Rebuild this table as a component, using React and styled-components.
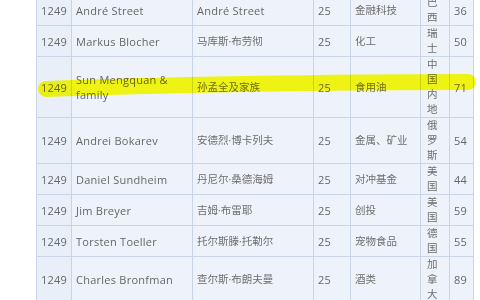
import React from "react";
import styled, { createGlobalStyle } from "styled-components";

const Global = createGlobalStyle`
  html, body { margin: 0; padding: 0; background: #fff; overflow: hidden; }
  body { width: 480px; height: 300px; }
`;

const Page = styled.div`
  position: relative;
  margin-top: -6px;
  padding-left: 36px;
`;

const Table = styled.table`
  border-collapse: collapse;
  table-layout: fixed;
  width: 437px;
  font-family: "Open Sans", "Noto Sans CJK SC", sans-serif;
  font-size: 11px;
  color: #666;
`;

const Col = styled.col`
  width: ${(p) => p.$w}px;
`;

const Row = styled.tr``;

const Cell = styled.td`
  border: 1px solid #c9d5e6;
  background: ${(p) => (p.$first ? "#e9eff9" : "#eef3fb")};
  padding: 0 ${(p) => p.$pad ?? 4}px;
  line-height: 15px;
  vertical-align: middle;
  font-size: ${(p) => (p.$cjk ? "10.5px" : "11px")};
  letter-spacing: ${(p) => (p.$cjk ? "0" : "0.25px")};
  color: ${(p) => (p.$cjk ? "#6e6e6e" : "#666")};
  word-break: ${(p) => (p.$wrap ? "break-all" : "normal")};
`;

const Highlight = styled.svg`
  position: absolute;
  left: 0;
  top: 0;
  width: 480px;
  height: 320px;
  pointer-events: none;
  mix-blend-mode: multiply;
`;

const widths = [35, 121, 121, 37, 70, 29, 24];
const isCjk = (s) => /[\u3000-\u9fff]/.test(s);

const rows = [
  ["1249", "André Street", "André Street", "25", "金融科技", "巴西", "36"],
  ["1249", "Markus Blocher", "马库斯·布劳彻", "25", "化工", "瑞士", "50"],
  ["1249", "Sun Mengquan & family", "孙孟全及家族", "25", "食用油", "中国内地", "71"],
  ["1249", "Andrei Bokarev", "安德烈·博卡列夫", "25", "金属、矿业", "俄罗斯", "54"],
  ["1249", "Daniel Sundheim", "丹尼尔·桑德海姆", "25", "对冲基金", "美国", "44"],
  ["1249", "Jim Breyer", "吉姆·布雷耶", "25", "创投", "美国", "59"],
  ["1249", "Torsten Toeller", "托尔斯滕·托勒尔", "25", "宠物食品", "德国", "55"],
  ["1249", "Charles Bronfman", "查尔斯·布朗夫曼", "25", "酒类", "加拿大", "89"],
];

export default function App() {
  return (
    <>
      <Global />
      <Page>
        <Table>
          <colgroup>
            {widths.map((w, i) => (
              <Col key={i} $w={w} />
            ))}
          </colgroup>
          <tbody>
            {rows.map((r, i) => (
              <Row key={i}>
                <Cell $first>{r[0]}</Cell>
                <Cell>{r[1]}</Cell>
                <Cell $cjk={isCjk(r[2])}>{r[2]}</Cell>
                <Cell>{r[3]}</Cell>
                <Cell $cjk>{r[4]}</Cell>
                <Cell $cjk $wrap $pad={6}>{r[5]}</Cell>
                <Cell>{r[6]}</Cell>
              </Row>
            ))}
          </tbody>
        </Table>
        <Highlight viewBox="0 0 480 320">
          <path
            d="M46 95 C 150 91, 330 88, 468 88"
            stroke="#ffff14"
            strokeWidth="16"
            strokeLinecap="round"
            fill="none"
          />
        </Highlight>
      </Page>
    </>
  );
}
